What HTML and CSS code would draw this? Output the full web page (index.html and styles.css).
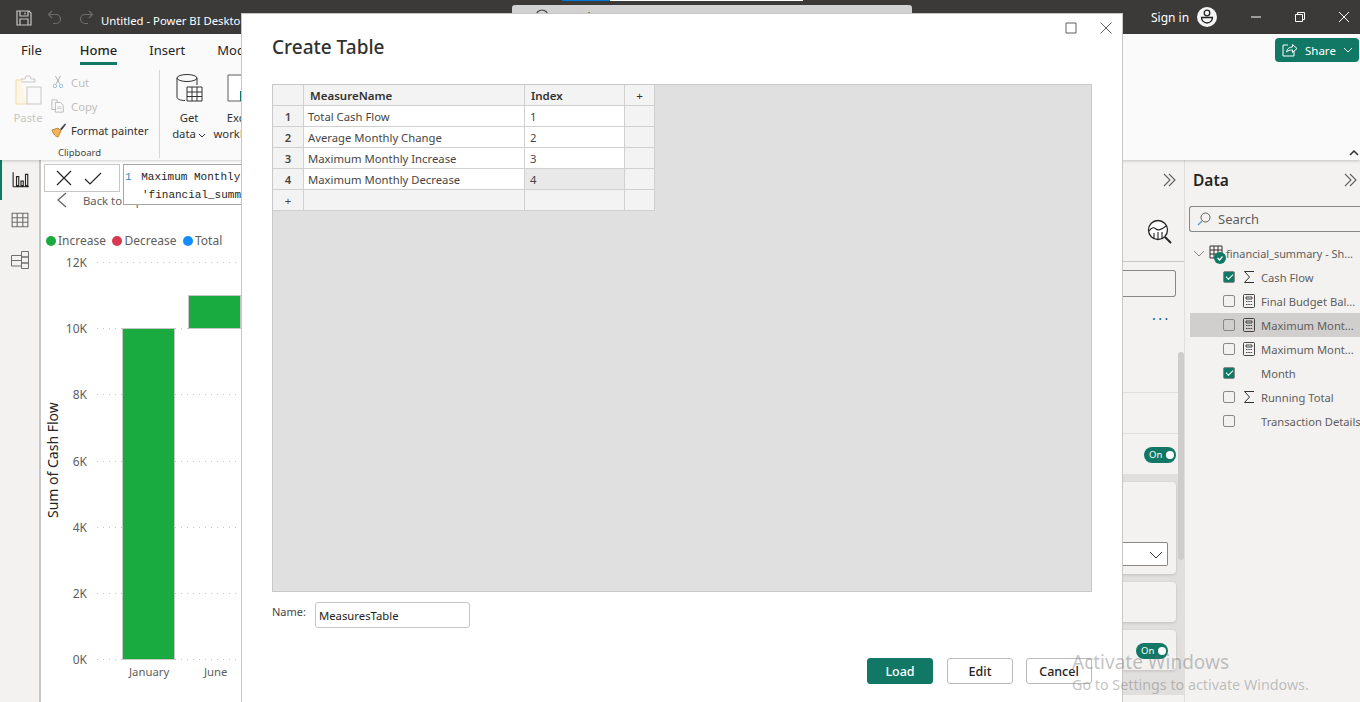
FILE: index.html
```html
<!DOCTYPE html>
<html lang="en">
<head>
<meta charset="utf-8">
<title>Untitled - Power BI Desktop</title>
<link rel="stylesheet" href="styles.css">
</head>
<body>
<div class="app">
  <header class="titlebar">
    <div class="qat">
      <svg class="ic16" viewBox="0 0 16 16"><path d="M1 1h12l2 2v12H1zM4 1v5h8V1M4 15v-6h8v6M9 2.500v2" fill="none" stroke="#c8c6c4" stroke-width="1.200"/></svg>
      <svg class="ic16 dim" viewBox="0 0 16 16"><path d="M5 1 1.500 4.500 5 8M2 4.500h7a4.500 4.500 0 0 1 0 9H6" fill="none" stroke="#6e6c6a" stroke-width="1.200"/></svg>
      <svg class="ic16 dim" viewBox="0 0 16 16"><path d="M11 1l3.500 3.500L11 8M14 4.500H7a4.500 4.500 0 0 0 0 9h3" fill="none" stroke="#6e6c6a" stroke-width="1.200"/></svg>
    </div>
    <span class="app-title">Untitled - Power BI Desktop</span>
    <div class="title-search">
      <svg class="search-glyph" viewBox="0 0 16 16"><circle cx="9" cy="7" r="6" fill="none" stroke="#444" stroke-width="1.200"/></svg>
      <span>Search</span>
    </div>
    <div class="signin">Sign in
      <svg class="avatar" viewBox="0 0 20 20"><circle cx="10" cy="10" r="10" fill="#f5f5f5"/><circle cx="10" cy="6" r="2.800" fill="none" stroke="#222" stroke-width="1.300"/><path d="M4.500 10.500h11a5.500 5.500 0 0 1-11 0z" fill="none" stroke="#222" stroke-width="1.300"/></svg>
    </div>
    <div class="winbtns">
      <svg class="ic12" viewBox="0 0 12 12"><path d="M1 6h10" stroke="#fff" stroke-width="1"/></svg>
      <svg class="ic12" viewBox="0 0 12 12"><path d="M1.500 3.500h7v7h-7zM3.500 3.500v-2h7v7h-2" fill="none" stroke="#fff" stroke-width="1"/></svg>
      <svg class="ic12" viewBox="0 0 12 12"><path d="M1 1l10 10M11 1 1 11" stroke="#fff" stroke-width="1"/></svg>
    </div>
  </header>
  <div class="loadbar"><i class="load-blue"></i><i class="load-white"></i></div>

  <section class="ribbon">
    <nav class="tabs">
      <span class="tab">File</span>
      <span class="tab active">Home</span>
      <span class="tab">Insert</span>
      <span class="tab">Modeling</span>
      <button class="share">
        <svg class="ic16" viewBox="0 0 16 16"><path d="M6 3H1v11h11V9" fill="none" stroke="#fff"/><path d="M4.500 10c.500-3.500 3-5 6-5V2.500L15 6.500l-4.500 4V8c-2.500 0-4.500.500-6 2z" fill="none" stroke="#fff"/></svg>
        <span>Share</span>
        <svg class="chev" viewBox="0 0 10 6"><path d="M1 1l4 4 4-4" fill="none" stroke="#fff"/></svg>
      </button>
    </nav>
    <div class="tools">
      <div class="group clip">
        <div class="clip-row">
          <div class="paste">
            <svg class="ic-paste" viewBox="0 0 30 32"><path d="M8 4h4l1-3h4l1 3h4v3H8z" fill="none" stroke="#c8c6c4"/><path d="M8 5H3v24h11" fill="#fdf6e7" stroke="#f3d9a4"/><rect x="14" y="12" width="14" height="17" fill="#fafafa" stroke="#c8c6c4"/></svg>
            <span>Paste</span>
          </div>
          <div class="clip-list">
            <div class="clip-item off"><svg class="ic14" viewBox="0 0 14 16"><path d="M4 1l5 9M10 1 5 10" stroke="#a8a6a4" fill="none"/><circle cx="3.500" cy="12.500" r="2" fill="none" stroke="#8ab8d8"/><circle cx="10.500" cy="12.500" r="2" fill="none" stroke="#8ab8d8"/></svg>Cut</div>
            <div class="clip-item off"><svg class="ic14" viewBox="0 0 16 16"><path d="M1 1h6v3M1 1v11h4" fill="none" stroke="#b8b6b4"/><path d="M5 4h6l3 3v8H5z" fill="none" stroke="#b8b6b4"/><path d="M7 9h5M7 11h5" stroke="#c8c6c4"/></svg>Copy</div>
            <div class="clip-item painter"><svg class="ic16 brush" viewBox="0 0 16 16"><path d="M1 8l6-2 3 3-3 6c-2 0-5-3-6-7z" fill="#f2b45a" stroke="#b5701f" stroke-width=".8"/><path d="M9 7l5-5.500 1 1L10.500 8.500z" fill="#444"/></svg>Format painter</div>
          </div>
        </div>
        <div class="group-name">Clipboard</div>
      </div>
      <div class="group data-group">
        <div class="big-btn">
          <svg class="ic-db" viewBox="0 0 28 32"><ellipse cx="12" cy="5" rx="10" ry="3.500" fill="none" stroke="#323130"/><path d="M2 5v19c0 2 3 3.500 8 3.500M22 5v7" fill="none" stroke="#323130"/><path d="M12 14h15v14H12zM12 19h15M12 23.500h15M17 14v14M22 14v14" fill="#fff" stroke="#323130"/></svg>
          <span>Get</span><span>data <svg class="mini-chev" viewBox="0 0 8 5"><path d="M1 1l3 3 3-3" fill="none" stroke="#323130"/></svg></span>
        </div>
        <div class="big-btn">
          <svg class="ic-db" viewBox="0 0 28 32"><path d="M2 2h24v26H2z" fill="#fff" stroke="#605e5c"/><path d="M14 18h12v10H14z" fill="#117865"/></svg>
          <span>Excel</span><span>workbook</span>
        </div>
      </div>
      <svg class="collapse" viewBox="0 0 10 6"><path d="M1 5l4-4 4 4" fill="none" stroke="#323130" stroke-width="1.500"/></svg>
    </div>
  </section>

  <main class="work">
    <aside class="rail">
      <div class="rail-btn sel"><svg class="ic18" viewBox="0 0 16 16"><path d="M1 1v13M15 14H1M4 5v8h2V5zM8 9v4h2V9zM12 3v10h2V3z" fill="none" stroke="#252423"/></svg></div>
      <div class="rail-btn"><svg class="ic18" viewBox="0 0 16 16"><path d="M1 2h14v12H1zM1 6h14M1 10h14M5.500 2v12M10.500 2v12" fill="none" stroke="#706e6c"/></svg></div>
      <div class="rail-btn"><svg class="ic18" viewBox="0 0 18 18"><path d="M.500 4.500H10.500V15H.500zM.500 9.500H10.500M10.500.500H17.500V6H10.500zM10.500 6H17.500V12H10.500zM10.500 12H17.500V17.500H10.500z" fill="none" stroke="#706e6c"/></svg></div>
    </aside>

    <section class="canvas">
      <div class="formula">
        <div class="fx-btns">
          <svg class="ic18" viewBox="0 0 18 18"><path d="M2 2l14 14M16 2 2 16" stroke="#252423" stroke-width="1.200"/></svg>
          <svg class="ic18" viewBox="0 0 18 18"><path d="M1 10l5 5L17 4" fill="none" stroke="#252423" stroke-width="1.200"/></svg>
        </div>
        <div class="fx-edit"><div><b class="ln">1</b> Maximum Monthly Increase =</div><div class="fx-second">'financial_summary'[Cash Flow]</div></div>
      </div>
      <div class="back">
        <svg class="back-ic" viewBox="0 0 12 16"><path d="M10 1 2 8l8 7" fill="none" stroke="#605e5c" stroke-width="1.200"/></svg>
        <span>Back to report</span>
      </div>
      <div class="legend">
        <span class="lg"><i class="dot g"></i>Increase</span>
        <span class="lg"><i class="dot r"></i>Decrease</span>
        <span class="lg"><i class="dot b"></i>Total</span>
      </div>
      <div class="chart">
        <div class="y-title">Sum of Cash Flow</div>
        <div class="plot">
          <div class="grid-row"><span>12K</span><i></i></div>
          <div class="grid-row"><span>10K</span><i></i></div>
          <div class="grid-row"><span>8K</span><i></i></div>
          <div class="grid-row"><span>6K</span><i></i></div>
          <div class="grid-row"><span>4K</span><i></i></div>
          <div class="grid-row"><span>2K</span><i></i></div>
          <div class="grid-row"><span>0K</span><i></i></div>
          <div class="bar jan"></div>
          <div class="bar jun"></div>
        </div>
        <div class="x-axis"><span class="x1">January</span><span class="x2">June</span></div>
      </div>
    </section>

    <aside class="viz">
      <div class="viz-top">
        <svg class="dchev" viewBox="0 0 14 14"><path d="M2 1l6 6-6 6M7 1l6 6-6 6" fill="none" stroke="#605e5c" stroke-width="1.100"/></svg>
      </div>
      <div class="viz-ic">
        <svg class="ic26" viewBox="0 0 26 26"><circle cx="11" cy="11" r="9.500" fill="#fff" stroke="#252423" stroke-width="1.300"/><path d="M2 12c3-4 5-4 7-2s5 1 10-3M7 20v-6M11 21v-8M15 20v-7" fill="none" stroke="#252423" stroke-width="1.100"/><path d="M18 18l6 6" stroke="#252423" stroke-width="2"/></svg>
      </div>
      <div class="viz-field"><div class="viz-input"></div></div>
      <div class="viz-dots">...</div>
      <div class="viz-sep a"></div>
      <div class="viz-sep b"></div>
      <div class="viz-toggle"><span class="toggle">On<i></i></span></div>
      <div class="viz-cards">
        <div class="card c1"><div class="select"><svg class="sel-chev" viewBox="0 0 14 8"><path d="M1 1l6 6 6-6" fill="none" stroke="#323130"/></svg></div></div>
        <div class="card c2"></div>
        <div class="card c3"><span class="toggle">On<i></i></span></div>
      </div>
      <div class="scroll"></div>
    </aside>

    <aside class="data">
      <div class="data-head"><h2>Data</h2><svg class="dchev" viewBox="0 0 14 14"><path d="M2 1l6 6-6 6M7 1l6 6-6 6" fill="none" stroke="#605e5c" stroke-width="1.100"/></svg></div>
      <div class="search"><svg class="ic14" viewBox="0 0 14 14"><circle cx="8.500" cy="5.500" r="4.500" fill="none" stroke="#605e5c"/><path d="M5 9l-4 4" stroke="#5b9bd5" stroke-width="1.200"/></svg>Search</div>
      <div class="tree-head">
        <svg class="tree-chev" viewBox="0 0 12 7"><path d="M1 1l5 5 5-5" fill="none" stroke="#8a8886"/></svg>
        <span class="tbl-ic">
          <svg class="ic14" viewBox="0 0 14 14"><path d="M1 1h12v12H1zM1 5h12M1 9h12M5 1v12M9 1v12" fill="none" stroke="#323130"/></svg>
          <svg class="tbl-badge" viewBox="0 0 12 12"><circle cx="6" cy="6" r="6" fill="#117865"/><path d="M3.500 6l2 2 3-3.500" fill="none" stroke="#fff" stroke-width="1.200"/></svg>
        </span>
        <span>financial_summary - Sh...</span>
      </div>
      <div class="field"><i class="cb on"></i><svg class="sym" viewBox="0 0 12 14"><path d="M11 1.500H1.500L6.500 7l-5 5.500H11" fill="none" stroke="#323130"/></svg><span>Cash Flow</span></div>
      <div class="field"><i class="cb"></i><svg class="sym" viewBox="0 0 12 14"><path d="M1.500.500h9a1 1 0 0 1 1 1v11a1 1 0 0 1-1 1h-9a1 1 0 0 1-1-1v-11a1 1 0 0 1 1-1zM3 3h6v2H3zM3 7.500h1.500M5.300 7.500h1.500M7.600 7.500h1.500M3 10.500h1.500M5.300 10.500h1.500M7.600 10.500h1.500" fill="none" stroke="#323130" stroke-width=".9"/></svg><span>Final Budget Bal...</span></div>
      <div class="field hl"><i class="cb"></i><svg class="sym" viewBox="0 0 12 14"><path d="M1.500.500h9a1 1 0 0 1 1 1v11a1 1 0 0 1-1 1h-9a1 1 0 0 1-1-1v-11a1 1 0 0 1 1-1zM3 3h6v2H3zM3 7.500h1.500M5.300 7.500h1.500M7.600 7.500h1.500M3 10.500h1.500M5.300 10.500h1.500M7.600 10.500h1.500" fill="none" stroke="#323130" stroke-width=".9"/></svg><span>Maximum Mont...</span></div>
      <div class="field"><i class="cb"></i><svg class="sym" viewBox="0 0 12 14"><path d="M1.500.500h9a1 1 0 0 1 1 1v11a1 1 0 0 1-1 1h-9a1 1 0 0 1-1-1v-11a1 1 0 0 1 1-1zM3 3h6v2H3zM3 7.500h1.500M5.300 7.500h1.500M7.600 7.500h1.500M3 10.500h1.500M5.300 10.500h1.500M7.600 10.500h1.500" fill="none" stroke="#323130" stroke-width=".9"/></svg><span>Maximum Mont...</span></div>
      <div class="field"><i class="cb on"></i><span class="sym"></span><span>Month</span></div>
      <div class="field"><i class="cb"></i><svg class="sym" viewBox="0 0 12 14"><path d="M11 1.500H1.500L6.500 7l-5 5.500H11" fill="none" stroke="#323130"/></svg><span>Running Total</span></div>
      <div class="field"><i class="cb"></i><span class="sym"></span><span>Transaction Details</span></div>
    </aside>
  </main>

  <div class="dialog">
    <div class="dlg-ctrl">
      <svg class="ic12" viewBox="0 0 12 12"><path d="M1 1h10v10H1z" fill="none" stroke="#605e5c"/></svg>
      <svg class="ic12" viewBox="0 0 12 12"><path d="M.500.500l11 11M11.500.500l-11 11" stroke="#605e5c"/></svg>
    </div>
    <h1>Create Table</h1>
    <div class="sheet">
      <table>
        <thead>
          <tr><th class="rowh"></th><th class="c-name">MeasureName</th><th class="c-idx">Index</th><th class="c-add">+</th></tr>
        </thead>
        <tbody>
          <tr><th class="rowh">1</th><td>Total Cash Flow</td><td>1</td><td class="fill"></td></tr>
          <tr><th class="rowh">2</th><td>Average Monthly Change</td><td>2</td><td class="fill"></td></tr>
          <tr><th class="rowh">3</th><td>Maximum Monthly Increase</td><td>3</td><td class="fill"></td></tr>
          <tr><th class="rowh">4</th><td>Maximum Monthly Decrease</td><td class="cur">4</td><td class="fill"></td></tr>
          <tr class="add"><th class="rowh plus">+</th><td class="fill"></td><td class="fill"></td><td class="fill"></td></tr>
        </tbody>
      </table>
    </div>
    <div class="name-row">
      <label for="nm">Name:</label>
      <input id="nm" class="name-input" value="MeasuresTable">
    </div>
    <div class="dlg-btns">
      <button class="btn primary">Load</button>
      <button class="btn">Edit</button>
      <button class="btn">Cancel</button>
    </div>
  </div>

  <div class="activate">
    <div class="a1">Activate Windows</div>
    <div class="a2">Go to Settings to activate Windows.</div>
  </div>
</div>
</body>
</html>
```
FILE: styles.css
```css
* { box-sizing: border-box; }
html, body { margin: 0; padding: 0; }
body { font-family: "Noto Sans", "Open Sans", sans-serif; font-size: 11.3px; color: #323130; }
svg { display: block; flex: none; }
.app { position: relative; width: 1360px; height: 702px; overflow: hidden; display: flex; flex-direction: column; background: #f3f2f1; }
.ic12 { width: 12px; height: 12px; }
.ic14 { width: 14px; height: 14px; }
.ic16 { width: 16px; height: 16px; }
.ic18 { width: 18px; height: 18px; }
.ic26 { width: 26px; height: 26px; }

/* title bar */
.titlebar { height: 34px; flex: none; background: #3b3a39; color: #fff; display: flex; align-items: center; padding-left: 16px; position: relative; }
.qat { display: flex; gap: 15px; margin-top: 2px; }
.app-title { margin-left: 7px; font-size: 11.3px; margin-top: 7px; white-space: nowrap; width: 411px; }
.title-search { width: 400px; height: 29px; margin-top: 5px; align-self: flex-start; background: #d2d2d2; border-radius: 3px; display: flex; gap: 8px; padding: 4px 0 0 21px; color: #444; font-size: 12px; }
.search-glyph { width: 16px; height: 16px; }
.signin { margin-left: 239px; display: flex; align-items: center; gap: 8px; font-size: 12px; width: 99px; }
.avatar { width: 20px; height: 20px; }
.winbtns { display: flex; gap: 32px; padding-left: 0; }
.loadbar { position: absolute; left: 562px; top: 0; display: flex; height: 1px; }
.load-blue { width: 48px; background: #0078d4; }
.load-white { width: 193px; background: #fff; }

/* ribbon */
.ribbon { height: 126px; flex: none; background: #fafafa; box-shadow: 0 1px 3px rgba(0,0,0,.2); position: relative; z-index: 2; }
.tabs { height: 32px; display: flex; align-items: flex-start; padding: 8px 1px 0 21px; gap: 32px; font-size: 13px; color: #252423; }
.tab { height: 23px; line-height: 17px; white-space: nowrap; }
.tab.active { margin-left: 6px; font-weight: 500; border-bottom: 3px solid #117865; }
.share { margin-left: auto; margin-top: -4px; width: 84px; height: 24px; background: #117865; color: #fff; border: 0; border-radius: 4px; display: flex; align-items: center; gap: 7px; padding: 0 0 0 7px; font: inherit; font-size: 11.500px; }
.chev { width: 10px; height: 6px; }
.tools { height: 94px; display: flex; position: relative; padding-top: 4px; }
.group { display: flex; }
.clip { width: 160px; flex-direction: column; border-right: 1px solid #d8d6d4; height: 88px; }
.clip-row { display: flex; height: 72px; padding-left: 12px; }
.paste { width: 32px; display: flex; flex-direction: column; align-items: center; color: #c8c6c4; gap: 3px; padding-top: 5px; }
.ic-paste { width: 30px; height: 32px; }
.clip-list { margin-left: 7px; display: flex; flex-direction: column; gap: 4px; padding-top: 2px; }
.clip-item { height: 20px; display: flex; align-items: center; gap: 6px; white-space: nowrap; font-size: 11.300px; }
.clip-item.painter { gap: 4px; font-size: 11px; }
.clip-item.off { color: #c0bebc; }
.group-name { text-align: center; font-size: 9.500px; margin-top: 6px; color: #484644; }
.data-group { padding: 3px 0 0 14px; gap: 21px; }
.big-btn { width: 30px; display: flex; flex-direction: column; align-items: center; white-space: nowrap; line-height: 16px; font-size: 11.300px; }
.ic-db { width: 28px; height: 32px; margin-bottom: 5px; }
.big-btn span { display: flex; align-items: center; gap: 2px; }
.mini-chev { width: 8px; height: 5px; margin-top: 2px; }
.collapse { position: absolute; right: 1px; bottom: 4px; width: 10px; height: 6px; }

/* work area */
.work { flex: 1; display: flex; min-height: 0; }
.rail { width: 41px; flex: none; background: #f3f2f1; border-right: 2px solid #c8c6c4; display: flex; flex-direction: column; }
.rail-btn { height: 40px; padding: 11px 0 0 11px; }
.rail-btn.sel { border-left: 2px solid #117865; padding-left: 10px; }
.canvas { width: 1081px; flex: none; background: #fff; position: relative; display: flex; flex-direction: column; padding-top: 32px; }
.formula { position: absolute; left: 3px; top: 4px; display: flex; gap: 3px; z-index: 1; }
.fx-btns { width: 76px; height: 28px; background: #fff; border: 1px solid #c8c6c4; display: flex; align-items: center; gap: 11px; padding-left: 10px; }
.fx-edit { width: 400px; height: 41px; background: #fff; border: 1px solid #a8a6a4; font-family: "Liberation Mono", monospace; font-size: 11px; line-height: 18px; padding: 3px 0 0 1px; color: #252423; white-space: nowrap; }
.fx-second { padding-left: 17px; }
.ln { font-weight: 400; color: #2b88c8; padding-right: 3px; }
.back { height: 18px; display: flex; align-items: center; gap: 15px; padding-left: 15px; color: #605e5c; font-size: 11.300px; }
.back-ic { width: 12px; height: 16px; }
.legend { display: flex; gap: 6.500px; padding: 25px 0 0 5px; color: #605e5c; font-size: 12px; line-height: 16px; }
.lg { display: flex; align-items: center; gap: 2px; }
.dot { width: 10px; height: 10px; border-radius: 50%; }
.dot.g { background: #1aab40; }
.dot.r { background: #d9394e; }
.dot.b { background: #118dff; }
.chart { position: relative; padding-top: 13px; }
.plot { position: relative; }
.grid-row { height: 66.200px; display: flex; align-items: flex-start; }
.grid-row span { width: 46px; text-align: right; font-size: 12px; line-height: 14px; margin-top: -6px; color: #605e5c; }
.grid-row i { flex: 1; height: 1px; margin-left: 10px; background: repeating-linear-gradient(90deg, #c8c6c4 0 1px, transparent 1px 6px); }
.bar { position: absolute; background: #1aab40; border: 1px solid #c8c6c4; width: 53px; }
.bar.jan { left: 81px; top: 66px; height: 332px; }
.bar.jun { left: 147px; top: 33px; height: 34px; }
.y-title { position: absolute; left: 4px; top: 151px; height: 120px; width: 16px; writing-mode: vertical-rl; transform: rotate(180deg); font-size: 14px; line-height: 16px; white-space: nowrap; text-align: center; color: #252423; z-index: 1; }
.x-axis { position: absolute; top: 415px; left: 0; width: 240px; height: 16px; color: #605e5c; font-size: 11.300px; }
.x-axis span { position: absolute; line-height: 16px; }
.x1 { left: 88px; }
.x2 { left: 163px; }

/* visualisations pane (mostly hidden by the dialog) */
.viz { width: 63px; flex: none; position: relative; border-right: 1px solid #e1dfdd; background: #f3f2f1; }
.viz-top { height: 40px; padding: 13px 0 0 40px; }
.dchev { width: 14px; height: 14px; }
.viz-ic { height: 62px; padding: 19px 0 0 25px; border-bottom: 1px solid #c8c6c4; }
.viz-field { height: 35px; padding-top: 8px; }
.viz-input { width: 54px; height: 27px; border: 1px solid #8a8886; border-left: 0; border-radius: 0 3px 3px 0; }
.viz-dots { position: absolute; left: 30px; top: 147px; font-size: 14px; line-height: 16px; letter-spacing: 2.500px; color: #12509a; }
.viz-sep { position: absolute; left: 0; width: 56px; border-top: 1px solid #e1dfdd; }
.viz-sep.a { top: 232px; }
.viz-sep.b { top: 273px; }
.viz-toggle { position: absolute; left: 22px; top: 287px; }
.toggle { width: 32px; height: 16px; border-radius: 8px; background: #117865; color: #fff; font-size: 9.500px; line-height: 16px; display: flex; justify-content: space-between; align-items: center; padding: 0 2px 0 5px; }
.toggle i { width: 8px; height: 8px; background: #fff; border-radius: 50%; }
.viz-cards { position: absolute; left: 0; top: 314px; width: 62px; height: 221px; background: #e1dfdd; padding-top: 8px; display: flex; flex-direction: column; gap: 8px; }
.card { width: 54px; background: #f3f2f1; border-radius: 0 4px 4px 0; box-shadow: 0 1px 3px rgba(0,0,0,.15); }
.c1 { height: 92px; padding-top: 60px; }
.c2 { height: 40px; }
.c3 { height: 40px; padding: 13px 0 0 14px; }
.select { width: 46px; height: 24px; background: #fff; border: 1px solid #8a8886; border-left: 0; border-radius: 0 2px 2px 0; padding: 8px 0 0 27px; }
.sel-chev { width: 14px; height: 8px; }
.scroll { position: absolute; left: 56px; top: 192px; width: 6px; height: 208px; border-radius: 3px; background: #cfcdcb; }

/* data pane */
.data { flex: 1; background: #f3f2f1; min-width: 0; overflow: hidden; }
.data-head { height: 40px; display: flex; align-items: center; justify-content: space-between; padding: 0 3px 0 8px; }
.data-head h2 { margin: 0; font-size: 15.500px; font-weight: 600; color: #252423; }
.search { margin: 6px 0 0 4px; height: 26px; border: 1px solid #8a8886; border-right: 0; border-radius: 3px 0 0 3px; display: flex; align-items: center; gap: 7px; padding-left: 7px; font-size: 13px; color: #605e5c; }
.tree-head { display: flex; align-items: center; height: 24px; margin-top: 9px; padding-left: 8px; color: #605e5c; font-size: 10.900px; white-space: nowrap; }
.tree-chev { width: 12px; height: 7px; margin-right: 4px; }
.tbl-ic { position: relative; width: 17px; height: 16px; flex: none; }
.tbl-badge { position: absolute; left: 5px; top: 7px; width: 12px; height: 12px; }
.field { height: 24px; display: flex; align-items: center; padding-left: 38px; color: #605e5c; white-space: nowrap; font-size: 11.200px; }
.field.hl { margin-left: 5px; padding-left: 33px; background: #d0cfcd; }
.cb { width: 12px; height: 12px; border: 1px solid #8a8886; border-radius: 2px; margin-right: 8px; flex: none; }
.cb.on { background: #117865; position: relative; }
.cb.on::after { content: ""; position: absolute; left: 2px; top: 2px; width: 6px; height: 3px; border-left: 1.200px solid #fff; border-bottom: 1.200px solid #fff; transform: rotate(-45deg); }
.sym { width: 12px; height: 14px; margin-right: 6px; flex: none; }

/* dialog */
.dialog { position: absolute; left: 241px; top: 13px; width: 882px; height: 689px; background: #fff; border: 1px solid #c8c6c4; border-bottom: 0; z-index: 3; padding: 0 30px; display: flex; flex-direction: column; }
.dlg-ctrl { position: absolute; right: 10px; top: 8px; display: flex; gap: 23px; }
.dialog h1 { margin: 20px 0 0; font-size: 19px; font-weight: 500; line-height: 27px; color: #323130; }
.sheet { margin-top: 23px; height: 508px; background: #e0e0e0; border: 1px solid #c8c8c8; }
table { border-collapse: separate; border-spacing: 0; table-layout: fixed; width: 382px; font-size: 11.300px; }
th, td { height: 21px; padding: 0; border-right: 1px solid #d0d0d0; border-bottom: 1px solid #d0d0d0; font-weight: 400; text-align: left; background: #fff; color: #484644; white-space: nowrap; overflow: hidden; }
thead th { background: #f3f3f3; font-size: 11.500px; font-weight: 600; color: #323130; padding-left: 6px; }
.c-name { width: 221px; }
.c-idx { width: 100px; }
thead .c-add { width: 30px; text-align: center; padding-left: 0; font-weight: 400; }
thead .rowh, .rowh { width: 31px; padding-left: 0; background: #f3f3f3; text-align: center; font-weight: 600; }
td { padding-left: 4px; }
td + td { padding-left: 5px; }
td.fill { background: #f3f3f3; }
td.cur { background: #e9e9e9; }
.rowh.plus { font-weight: 400; }
.name-row { margin-top: 10px; display: flex; align-items: flex-start; }
.name-row label { width: 43px; font-size: 11px; line-height: 20px; color: #484644; }
.name-input { width: 155px; height: 26px; border: 1px solid #c8c6c4; border-radius: 3px; padding: 0 3px; font: inherit; font-size: 11.300px; color: #252423; outline: 0; }
.dlg-btns { margin-top: 30px; display: flex; justify-content: flex-end; gap: 14px; }
.btn { width: 66px; height: 26px; padding: 0; border: 1px solid #bdbbb9; border-radius: 3px; background: #fff; color: #252423; font: inherit; font-size: 12.500px; font-weight: 500; }
.btn:last-child { margin-left: -1px; }
.btn.primary { background: #117865; border-color: #117865; color: #fff; }

/* watermark */
.activate { position: absolute; left: 1072px; top: 649px; z-index: 4; color: rgba(110,110,110,.42); white-space: nowrap; pointer-events: none; }
.a1 { font-size: 19px; line-height: 26px; }
.a2 { font-size: 14.300px; line-height: 20px; }
```
